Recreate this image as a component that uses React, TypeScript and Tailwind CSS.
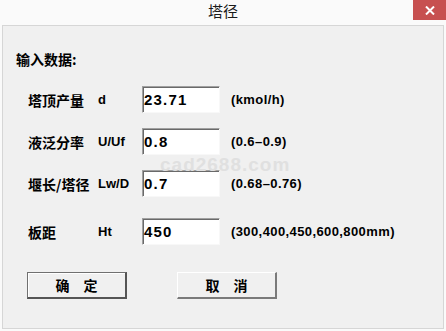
import React from 'react'

const cjk = '[font-family:"Noto_Sans_CJK_SC",sans-serif]'
const latin = '[font-family:"Liberation_Sans",Arial,sans-serif]'

function Field({ value }: { value: string }) {
    return (
        <div className="w-[78px] h-[27px] shrink-0 bg-white border border-t-[#a0a0a0] border-l-[#a0a0a0] border-r-[#f8f8f8] border-b-[#f8f8f8] shadow-[inset_1px_1px_0_#696969] pl-[1px]">
            <span className={`${latin} text-[15px] font-bold tracking-[1.2px] leading-[19px] text-black`}>{value}</span>
        </div>
    )
}

function Row({ label, sym, value, unit, top }: { label: string; sym: string; value: string; unit: string; top: string }) {
    return (
        <div className={`flex items-center h-[27px] ${top}`}>
            <div className={`${cjk} w-[95px] shrink-0 pl-[25px] text-[14px] font-bold leading-4 text-black whitespace-nowrap`}>{label}</div>
            <div className={`${latin} w-[44px] shrink-0 text-[13px] font-bold text-black`}>{sym}</div>
            <Field value={value} />
            <div className={`${latin} ml-[11px] text-[13px] font-bold tracking-[0.4px] text-black whitespace-nowrap`}>{unit}</div>
        </div>
    )
}

export default function App() {
    return (
        <div className="w-[446px] h-[331px] bg-[#fafafa] flex flex-col overflow-hidden">
            <div className="h-[25px] relative flex items-start justify-center">
                <span className={`${cjk} text-[15px] leading-[22px] text-[#1a1a1a]`}>塔径</span>
                <div className="absolute right-0 top-0 w-[33px] h-[20px] bg-[#c75050] flex items-center justify-center">
                    <svg width="10" height="9" viewBox="0 0 10 9">
                        <path d="M1 0.5 L9 8.5 M9 0.5 L1 8.5" stroke="white" strokeWidth="2" />
                    </svg>
                </div>
            </div>
            <div className="relative flex-1 mx-[2px] mb-[2px] border border-[#d6d6d6] bg-[#f0f0f0] flex flex-col">
                <div className={`${cjk} pl-[13px] pt-[25px] text-[14px] font-bold leading-4 text-black`}>输入数据:</div>
                <Row top="mt-[19px]" label="塔顶产量" sym="d" value="23.71" unit="(kmol/h)" />
                <Row top="mt-[15px]" label="液泛分率" sym="U/Uf" value="0.8" unit="(0.6–0.9)" />
                <Row top="mt-[15px]" label="堰长/塔径" sym="Lw/D" value="0.7" unit="(0.68–0.76)" />
                <Row top="mt-[21px]" label="板距" sym="Ht" value="450" unit="(300,400,450,600,800mm)" />
                <div className="flex mt-[27px] pl-[24px] gap-[50px]">
                    <div className={`${cjk} w-[100px] h-[27px] flex items-center justify-center gap-[14px] border border-[#707070] border-r-2 border-b-2 border-r-[#555] border-b-[#555] bg-[#f0f0f0] shadow-[inset_1px_1px_0_#fff] text-[14px] font-bold text-black`}>
                        <span>确</span>
                        <span>定</span>
                    </div>
                    <div className={`${cjk} w-[100px] h-[27px] flex items-center justify-center gap-[14px] border border-t-white border-l-white border-r-2 border-b-2 border-r-[#7a7a7a] border-b-[#7a7a7a] bg-[#f0f0f0] text-[14px] font-bold text-black`}>
                        <span>取</span>
                        <span>消</span>
                    </div>
                </div>
                <div className={`${latin} absolute left-[157px] top-[125px] text-[19px] font-bold tracking-[1px] text-[#e0e0e0] pointer-events-none`}>cad2688.com</div>
            </div>
        </div>
    )
}
